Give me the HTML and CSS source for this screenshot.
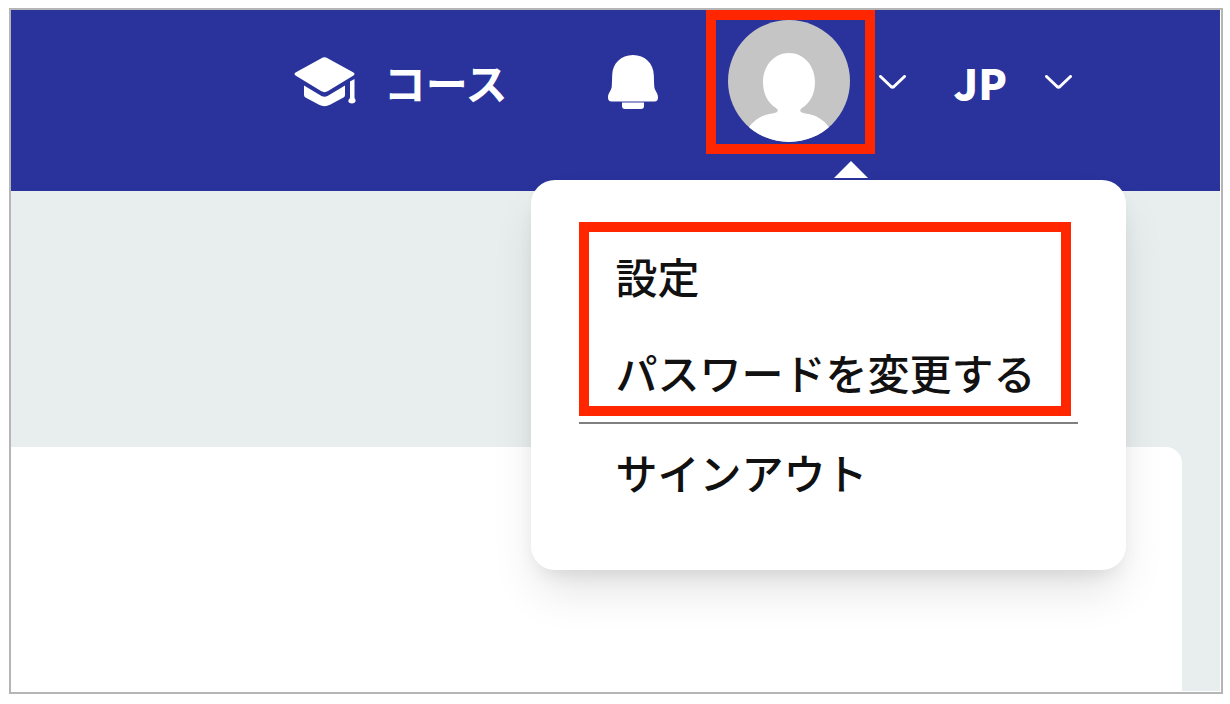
FILE: index.html
```html
<!DOCTYPE html>
<html lang="ja">
<head>
    <meta charset="UTF-8">
    <meta name="viewport" content="width=device-width, initial-scale=1.0">
    <title>コース</title>
    <link rel="stylesheet" href="styles.css">
</head>
<body>
    <div class="frame">
        <!-- Header -->
        <header class="header">
            <a class="course-link" href="#">
                <svg class="cap-icon" viewBox="0 0 62 50" fill="#fff" aria-hidden="true">
                    <path d="M27 1.500Q30.500-.8 34 1.500L59.500 15.500Q61.500 17 59.500 18.500L34 34Q30.500 36.300 27 34L1.500 18.500Q-.5 17 1.500 15.500Z"/>
                    <path d="M10 28.500L27.500 39Q30.500 40.600 33.500 39L51 28.500V38Q51 39.500 49.500 40.500L36 47.800Q30.500 50.500 25 47.800L11.500 40.500Q10 39.500 10 38Z"/>
                    <path d="M56 24.500L60.500 22V41Q62 42.500 61.500 44.500Q60.500 46.500 58 46.500Q55 46.500 54.300 44.500Q54 42.500 56 41Z"/>
                </svg>
                <span>コース</span>
            </a>

            <button class="icon-button" type="button" aria-label="お知らせ">
                <svg class="bell-icon" viewBox="0 0 50 54" fill="#fff" aria-hidden="true">
                    <path d="M25 0C37 0 45.500 8.500 45.800 20L46.200 31C46.500 36 50 37.500 50 42.500Q50 46.500 46.500 46.500H3.500Q0 46.500 0 42.500C0 37.500 3.500 36 3.800 31L4.200 20C4.500 8.500 13 0 25 0Z"/>
                    <path d="M14 47.500H36V51Q36 54 33 54H17Q14 54 14 51Z"/>
                </svg>
            </button>

            <div class="account">
                <button class="avatar-button" type="button" aria-label="アカウント">
                    <svg class="avatar" viewBox="0 0 122 122" aria-hidden="true">
                        <clipPath id="avatar-circle"><circle cx="61" cy="61" r="61"/></clipPath>
                        <g clip-path="url(#avatar-circle)">
                            <rect width="122" height="122" fill="#c5c5c5"/>
                            <path fill="#fff" d="M61 33C76 33 87 46 87 62C87 74 82 83 74 88C70 91 73 93 81 94C90 96 98 101 104 112V122H18V112C24 101 32 96 41 94C49 93 52 91 48 88C40 83 35 74 35 62C35 46 46 33 61 33Z"/>
                        </g>
                    </svg>
                </button>
                <button class="icon-button" type="button" aria-label="メニュー">
                    <svg class="chevron" viewBox="0 0 27 14" aria-hidden="true"><path d="M1.500 1.500L12 11.500Q13.500 12.800 15 11.500L25.500 1.500"/></svg>
                </button>

                <!-- Account menu -->
                <nav class="menu">
                    <div class="menu-group highlighted">
                        <a class="menu-item" href="#">設定</a>
                        <a class="menu-item" href="#">パスワードを変更する</a>
                    </div>
                    <hr class="divider">
                    <div class="menu-group">
                        <a class="menu-item" href="#">サインアウト</a>
                    </div>
                </nav>
            </div>

            <button class="language" type="button">
                <span>JP</span>
                <svg class="chevron" viewBox="0 0 27 14" aria-hidden="true"><path d="M1.500 1.500L12 11.500Q13.500 12.800 15 11.500L25.500 1.500"/></svg>
            </button>
        </header>

        <!-- Page content -->
        <main class="content">
            <div class="panel"></div>
        </main>
    </div>
</body>
</html>
```

FILE: styles.css
```css
* {
    box-sizing: border-box;
}
body {
    display: flex;
    min-height: 100vh;
    margin: 0;
    padding: 8px 7px 10px 9px;
    font-family: "Noto Sans CJK JP", sans-serif;
    background-color: white;
}
button {
    margin: 0;
    padding: 0;
    border: none;
    background: none;
    color: inherit;
    font: inherit;
    cursor: pointer;
}
a {
    color: inherit;
    text-decoration: none;
}
svg {
    display: block;
}
.frame {
    flex: 1;
    display: flex;
    flex-direction: column;
    padding: 0 1px 1px 0;
    border: 2px solid #b5b5b5;
}

/* Header */
.header {
    display: flex;
    align-items: center;
    justify-content: flex-end;
    gap: 48px;
    padding: 0 148px 37px 0;
    background-color: #2a339b;
    color: white;
    font-size: 42px;
    font-weight: 700;
    line-height: 60px;
}
.course-link {
    display: flex;
    align-items: center;
    gap: 28px;
    margin-right: 52px;
}
.cap-icon {
    width: 62px;
    height: 50px;
}
.bell-icon {
    width: 50px;
    height: 54px;
}
.chevron {
    width: 27px;
    height: 14px;
    fill: none;
    stroke: white;
    stroke-width: 3;
    stroke-linecap: round;
}
.language {
    display: flex;
    align-items: center;
    gap: 38px;
    font-weight: 900;
}

/* Account */
.account {
    position: relative;
    display: flex;
    align-items: center;
    gap: 4px;
}
.avatar-button {
    padding: 0 15px 2px 12px;
    border: 10px solid #ff2600;
}
.avatar {
    width: 122px;
    height: 122px;
}

/* Account menu */
.menu {
    position: absolute;
    top: 170px;
    right: -220px;
    width: 595px;
    padding: 42px 48px 54px;
    border-radius: 24px;
    background-color: white;
    box-shadow: 0 26px 48px -8px rgba(0, 0, 0, 0.12), 0 10px 20px -8px rgba(0, 0, 0, 0.1);
    color: #111;
    font-weight: 500;
}
.menu::before {
    content: "";
    position: absolute;
    top: -19px;
    left: 303px;
    border: solid transparent;
    border-width: 0 17px 17px;
    border-bottom-color: white;
}
.menu-group {
    padding: 0 37px;
}
.highlighted {
    margin-right: 7px;
    padding: 0 27px;
    border: 10px solid #ff2600;
}
.menu-item {
    display: block;
    padding: 14px 0;
    white-space: nowrap;
}
.highlighted .menu-item:first-child {
    padding-bottom: 22px;
}
.highlighted .menu-item:last-child {
    padding-bottom: 4px;
}
.divider {
    height: 2px;
    margin: 6px 0 4px;
    border: none;
    background-color: #808080;
}

/* Page content */
.content {
    flex: 1;
    display: flex;
    padding: 256px 38px 0 0;
    background-color: #e8eeed;
}
.panel {
    flex: 1;
    border-radius: 0 16px 0 0;
    background-color: white;
}
```
